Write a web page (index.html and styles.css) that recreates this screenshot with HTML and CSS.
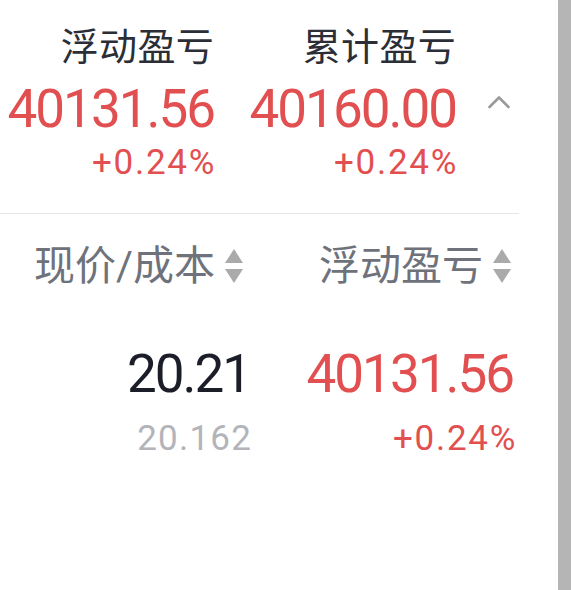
FILE: index.html
```html
<!DOCTYPE html>
<html lang="zh-CN">
<head>
    <meta charset="UTF-8">
    <meta name="viewport" content="width=device-width, initial-scale=1.0">
    <title>持仓盈亏</title>
    <link rel="stylesheet" href="styles.css">
</head>
<body>
    <div class="page">
        <main class="content">

            <!-- 汇总 -->
            <section class="summary">
                <div class="stat stat-float">
                    <div class="stat-title">浮动盈亏</div>
                    <div class="stat-value up">40131.56</div>
                    <div class="stat-rate up">+0.24%</div>
                </div>
                <div class="stat stat-total">
                    <div class="stat-title">累计盈亏</div>
                    <div class="stat-value up">40160.00</div>
                    <div class="stat-rate up">+0.24%</div>
                </div>
                <button class="toggle" type="button" aria-label="收起">
                    <svg width="24" height="16" viewBox="0 0 24 16">
                        <polyline points="2.5,13 12,3.5 21.5,13" fill="none" stroke="#9b9b9b" stroke-width="2.6" stroke-linecap="round" stroke-linejoin="round"/>
                    </svg>
                </button>
            </section>

            <hr class="divider">

            <!-- 持仓列表 -->
            <section class="holdings">
                <div class="thead">
                    <div class="th th-price">现价/成本
                        <svg class="sort" width="18" height="35" viewBox="0 0 18 35">
                            <polygon points="9,0 18,14 0,14" fill="#aaaaaa"/>
                            <polygon points="0,20 18,20 9,34" fill="#aaaaaa"/>
                        </svg>
                    </div>
                    <div class="th th-profit">浮动盈亏
                        <svg class="sort" width="18" height="35" viewBox="0 0 18 35">
                            <polygon points="9,0 18,14 0,14" fill="#aaaaaa"/>
                            <polygon points="0,20 18,20 9,34" fill="#aaaaaa"/>
                        </svg>
                    </div>
                </div>

                <div class="trow">
                    <div class="td">
                        <div class="main-num">20.21</div>
                        <div class="sub-num muted">20.162</div>
                    </div>
                    <div class="td">
                        <div class="main-num up">40131.56</div>
                        <div class="sub-num up">+0.24%</div>
                    </div>
                </div>
            </section>

        </main>
        <div class="scrollbar"></div>
    </div>
</body>
</html>
```

FILE: styles.css
```css
body {
    margin: 0;
    padding: 0;
    background-color: #ffffff;
    font-family: Roboto, "Noto Sans CJK SC", sans-serif;
    overflow: hidden;
}

.page {
    display: flex;
    height: 590px;
}

.content {
    width: 558px;
}

.scrollbar {
    width: 13px;
    height: 100%;
    background-color: #b5b5b5;
}

.up {
    color: #e24f50;
}

.muted {
    color: #b2b4ba;
}

/* 汇总 */
.summary {
    display: flex;
    align-items: flex-start;
    padding-top: 25px;
}

.stat {
    text-align: right;
}

.stat-float {
    width: 216px;
}

.stat-total {
    width: 242px;
}

.stat-title {
    font-size: 38px;
    line-height: 44px;
    color: #2b2e36;
    letter-spacing: 0.3px;
    padding-right: 2px;
}

.stat-value {
    margin-top: 11px;
    font-size: 53px;
    line-height: 58px;
    letter-spacing: -2px;
    padding-right: 2px;
}

.stat-rate {
    margin-top: 5px;
    font-size: 35px;
    line-height: 40px;
    letter-spacing: 1.7px;
}

.toggle {
    margin-top: 69px;
    margin-left: 29px;
    padding: 0;
    border: 0;
    background: none;
    line-height: 0;
}

.divider {
    width: 519px;
    margin: 30px 0 0 0;
    border: 0;
    border-top: 1px solid #e6e6e6;
}

/* 持仓列表 */
.holdings {
    padding-top: 30px;
}

.thead,
.trow {
    display: grid;
    grid-template-columns: 252px 263px;
}

.th {
    display: flex;
    justify-content: flex-end;
    align-items: center;
    gap: 10px;
    font-size: 41px;
    line-height: 44px;
    color: #6f727b;
}

.th-price {
    padding-right: 9px;
}

.th-profit {
    padding-right: 4px;
}

.trow {
    padding-top: 57px;
}

.td {
    text-align: right;
}

.main-num {
    font-size: 53px;
    line-height: 58px;
    letter-spacing: -2px;
    padding-right: 2px;
    color: #1b1e28;
}

.main-num.up {
    color: #e24f50;
}

.sub-num {
    margin-top: 16px;
    font-size: 35px;
    line-height: 40px;
    letter-spacing: 1.2px;
}

.sub-num.up {
    letter-spacing: 1.7px;
    margin-right: -2px;
}
```
